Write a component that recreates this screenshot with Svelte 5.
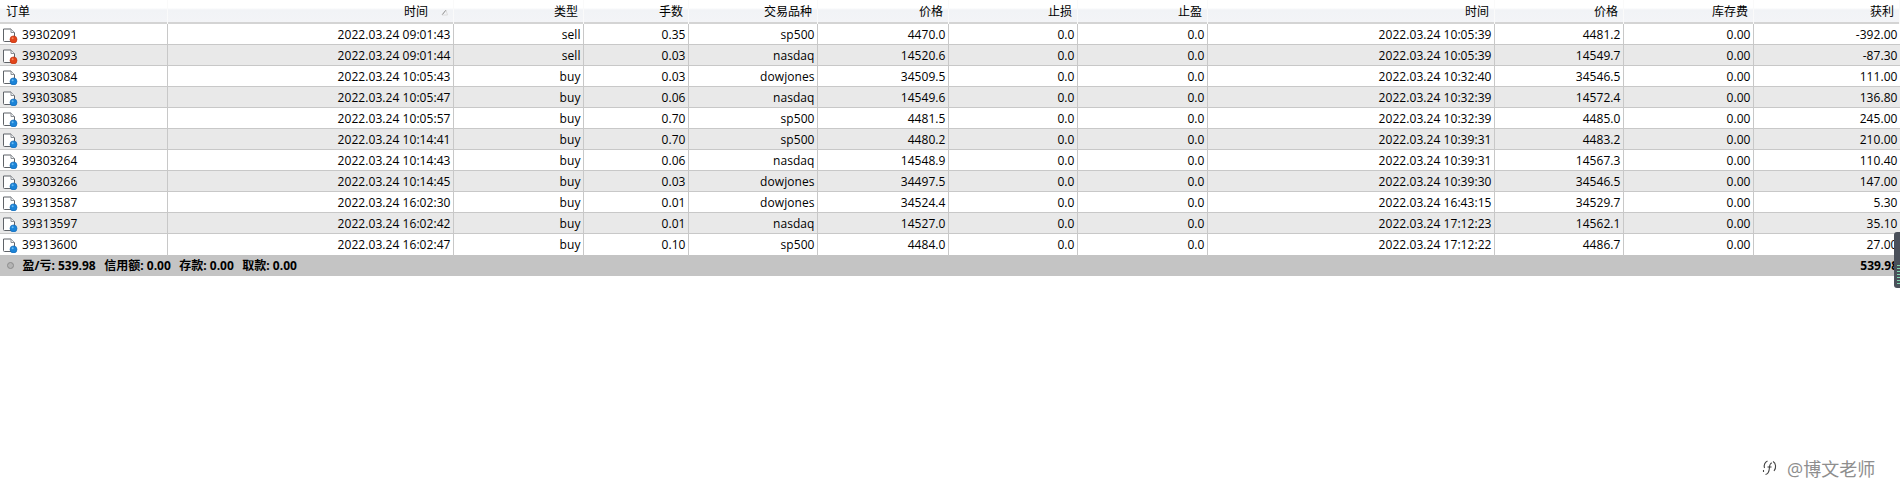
<script lang="ts">
  const headers = [
    { label: '订单', left: true },
    { label: '时间', sort: true },
    { label: '类型' },
    { label: '手数' },
    { label: '交易品种' },
    { label: '价格' },
    { label: '止损' },
    { label: '止盈' },
    { label: '时间' },
    { label: '价格' },
    { label: '库存费' },
    { label: '获利' }
  ];

  const widths = [168, 286, 130, 105, 129, 131, 129, 130, 287, 129, 130, 146];

  const orders = [
    ['39302091', '2022.03.24 09:01:43', 'sell', '0.35', 'sp500', '4470.0', '0.0', '0.0', '2022.03.24 10:05:39', '4481.2', '0.00', '-392.00'],
    ['39302093', '2022.03.24 09:01:44', 'sell', '0.03', 'nasdaq', '14520.6', '0.0', '0.0', '2022.03.24 10:05:39', '14549.7', '0.00', '-87.30'],
    ['39303084', '2022.03.24 10:05:43', 'buy', '0.03', 'dowjones', '34509.5', '0.0', '0.0', '2022.03.24 10:32:40', '34546.5', '0.00', '111.00'],
    ['39303085', '2022.03.24 10:05:47', 'buy', '0.06', 'nasdaq', '14549.6', '0.0', '0.0', '2022.03.24 10:32:39', '14572.4', '0.00', '136.80'],
    ['39303086', '2022.03.24 10:05:57', 'buy', '0.70', 'sp500', '4481.5', '0.0', '0.0', '2022.03.24 10:32:39', '4485.0', '0.00', '245.00'],
    ['39303263', '2022.03.24 10:14:41', 'buy', '0.70', 'sp500', '4480.2', '0.0', '0.0', '2022.03.24 10:39:31', '4483.2', '0.00', '210.00'],
    ['39303264', '2022.03.24 10:14:43', 'buy', '0.06', 'nasdaq', '14548.9', '0.0', '0.0', '2022.03.24 10:39:31', '14567.3', '0.00', '110.40'],
    ['39303266', '2022.03.24 10:14:45', 'buy', '0.03', 'dowjones', '34497.5', '0.0', '0.0', '2022.03.24 10:39:30', '34546.5', '0.00', '147.00'],
    ['39313587', '2022.03.24 16:02:30', 'buy', '0.01', 'dowjones', '34524.4', '0.0', '0.0', '2022.03.24 16:43:15', '34529.7', '0.00', '5.30'],
    ['39313597', '2022.03.24 16:02:42', 'buy', '0.01', 'nasdaq', '14527.0', '0.0', '0.0', '2022.03.24 17:12:23', '14562.1', '0.00', '35.10'],
    ['39313600', '2022.03.24 16:02:47', 'buy', '0.10', 'sp500', '4484.0', '0.0', '0.0', '2022.03.24 17:12:22', '4486.7', '0.00', '27.00']
  ];

  const columns = widths.map((w) => w + 'px').join(' ');
</script>

<div class="terminal" style="--cols: {columns}">
  <div class="head">
    {#each headers as h}
      <div class="hcell" class:left={h.left}>
        <span>{h.label}</span>
        {#if h.sort}
          <svg class="sort" width="7" height="7" viewBox="0 0 7 7"><path d="M1 6 L5 1" stroke="#8a8a8a" fill="none"/><path d="M5 1 L6.5 6 H1" stroke="#dcdcdc" fill="none"/></svg>
        {/if}
      </div>
    {/each}
  </div>

  {#each orders as row, i}
    <div class="row" class:alt={i % 2 === 1}>
      {#each row as value, c}
        {#if c === 0}
          <div class="cell first">
            <svg class="doc" width="15" height="16" viewBox="0 0 15 16">
              <path d="M0.5 2 H8 L11.5 5.5 V14.5 H1.5 Q0.5 14.5 0.5 13.5 Z" fill="#fff" stroke="#5f6368"/>
              <path d="M8 2 V5.5 H11.5" fill="#eef0f2" stroke="#8b8f94"/>
              <circle cx="10.5" cy="12.4" r="3.5" fill={row[2] === 'sell' ? '#e2441a' : '#1b84d8'} stroke={row[2] === 'sell' ? '#b8330f' : '#1467b0'} stroke-width="0.6"/>
              <circle cx="9.6" cy="11.2" r="1" fill={row[2] === 'sell' ? '#f58a5f' : '#6dbdf2'}/>
            </svg>
            <span>{value}</span>
          </div>
        {:else}
          <div class="cell">{value}</div>
        {/if}
      {/each}
    </div>
  {/each}

  <div class="summary">
    <div class="totals">
      <span class="dot"></span>
      <span>盈/亏: 539.98</span>
      <span>信用额: 0.00</span>
      <span>存款: 0.00</span>
      <span>取款: 0.00</span>
    </div>
    <div class="net">539.98</div>
  </div>

  <div class="edge">
    <i></i><i></i><i></i><i></i><i></i><i></i><i></i>
  </div>

  <div class="mark">
    <svg width="15" height="18" viewBox="0 0 15 18" fill="none" stroke="#444" stroke-width="1.1">
      <path d="M2.5 9 C1.5 6 3 3 5.5 2"/>
      <path d="M11 2.5 C14 4 14.5 9 12 12"/>
      <path d="M10 4 C8 4 7.6 6 7.4 9 C7.2 12 6.5 15 3.5 15.5"/>
      <path d="M5.5 8 H9.5"/>
      <path d="M1.5 11 V13"/>
    </svg>
    <span>@博文老师</span>
  </div>
</div>

<style>
  :global(body) {
    background: #fff;
  }

  .terminal {
    position: relative;
    width: 1900px;
    height: 503px;
    overflow: hidden;
    background: #fff;
    font-family: "Open Sans", "Noto Sans CJK SC", sans-serif;
    font-size: 12px;
    color: #000;
  }

  .head {
    display: grid;
    grid-template-columns: var(--cols);
    height: 22px;
    background: linear-gradient(#fff 0, #fff 36%, #f1f3f6 45%, #f3f4f7 100%);
    border-bottom: 2px solid #d4d4d4;
  }

  .hcell {
    position: relative;
    padding-right: 5px;
    text-align: right;
    line-height: 24px;
    border-right: 1px solid #fafafa;
    box-sizing: border-box;
  }

  .hcell.left {
    padding-left: 6px;
    text-align: left;
  }

  .hcell:nth-child(2) {
    padding-right: 25px;
  }

  .sort {
    position: absolute;
    right: 5px;
    top: 9px;
  }

  .row {
    display: grid;
    grid-template-columns: var(--cols);
    height: 20px;
    border-bottom: 1px solid #c8c8c8;
    background: #fff;
    letter-spacing: 0.06px;
  }

  .row.alt {
    background: #e9e9e9;
  }

  .row:nth-last-child(4) {
    border-bottom: 0;
    height: 21px;
  }

  .cell {
    padding-right: 2.5px;
    text-align: right;
    line-height: 22px;
    border-right: 1px solid #c8c8c8;
    box-sizing: border-box;
    white-space: nowrap;
  }

  .cell:last-child {
    border-right: 0;
  }

  .first {
    display: flex;
    align-items: center;
    gap: 4px;
    padding-left: 3px;
    text-align: left;
  }

  .doc {
    flex: none;
  }

  .summary {
    display: flex;
    justify-content: space-between;
    align-items: center;
    height: 21px;
    padding-right: 2px;
    background: #c4c4c4;
    font-weight: 700;
    line-height: 19px;
    color: #000;
  }

  .totals {
    display: flex;
    align-items: center;
    gap: 8.5px;
  }

  .dot {
    width: 5px;
    height: 5px;
    margin: 0 0 0 7px;
    border-radius: 50%;
    background: #b4b4b4;
    border: 1px solid #8c8c8c;
  }

  .edge {
    position: absolute;
    right: 0;
    top: 232px;
    display: flex;
    flex-direction: column;
    justify-content: flex-end;
    gap: 2px;
    width: 6px;
    height: 56px;
    padding: 0 0 4px 3px;
    box-sizing: border-box;
    background: #4a505a;
    border-radius: 3px 0 0 3px;
  }

  .edge i {
    display: block;
    height: 1px;
    background: #7fd8b0;
  }

  .mark {
    position: absolute;
    left: 1762px;
    top: 455px;
    display: flex;
    align-items: center;
    gap: 10px;
    font-size: 18px;
    color: #8e8e8e;
  }
</style>
